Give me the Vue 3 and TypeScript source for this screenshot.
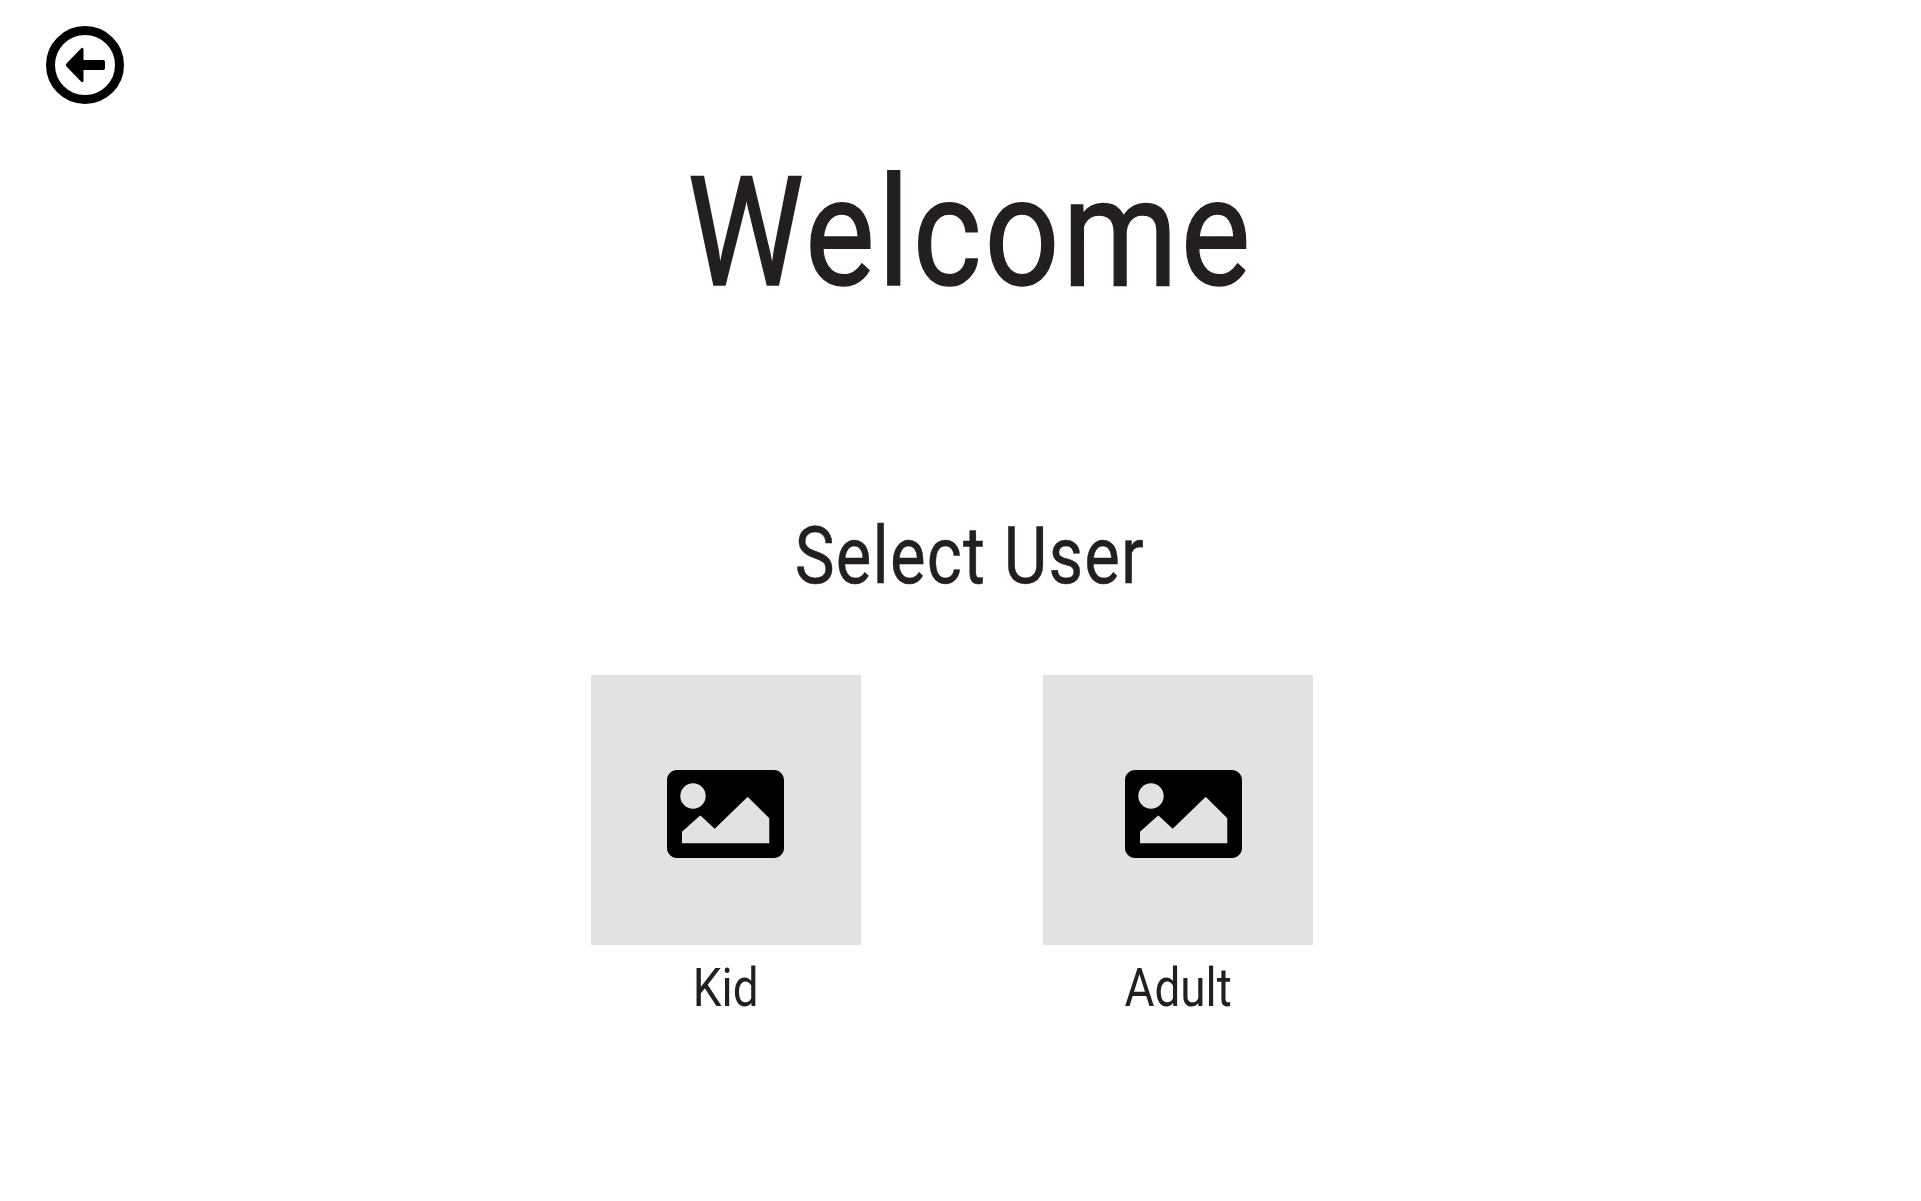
<script setup lang="ts">
interface UserOption {
  name: string
}

const users: UserOption[] = [{ name: 'Kid' }, { name: 'Adult' }]
</script>

<template>
  <main class="page">
    <button class="back" type="button" aria-label="Back">
      <svg width="80" height="80" viewBox="0 0 80 80" aria-hidden="true">
        <circle cx="40" cy="40" r="34.500" fill="none" stroke="#000" stroke-width="9" />
        <path
          d="M21.500 38.500 36 23.500c1.200-1.200 2.500-.6 2.500 1V35H58c1.200 0 2 .8 2 2v6c0 1.200-.8 2-2 2H38.500v10.500c0 1.600-1.300 2.200-2.500 1L21.500 41.500c-.8-.8-.8-2.200 0-3Z"
          fill="#000"
        />
      </svg>
    </button>

    <h1 class="title"><span>Welcome</span></h1>
    <h2 class="subtitle"><span>Select User</span></h2>

    <section class="users">
      <div v-for="user in users" :key="user.name" class="user" :class="user.name.toLowerCase()">
        <div class="thumb">
          <svg class="pic" width="117" height="88" viewBox="0 0 117 88" aria-hidden="true">
            <path
              fill-rule="evenodd"
              d="M10 0h97c5.500 0 10 4.500 10 10v68c0 5.500-4.500 10-10 10H10C4.500 88 0 83.500 0 78V10C0 4.500 4.500 0 10 0ZM15 73.300h87.300v-25L81.700 27.800c-.6-.6-1.400-.6-2 0L47.700 58.700 34.300 46.200c-.6-.6-1.400-.6-2 0L15 61.700ZM26 13.300a12.700 12.700 0 1 0 0 25.400 12.700 12.700 0 0 0 0-25.400Z"
              fill="#000"
            />
          </svg>
        </div>
        <span class="label">{{ user.name }}</span>
      </div>
    </section>
  </main>
</template>

<style scoped>
.page {
  box-sizing: border-box;
  height: 1201px;
  padding: 25px 0 0 45px;
  background: #fff;
  color: #231f20;
  font-family: Roboto, "Noto Sans", sans-serif;
  overflow: hidden;
}

.back {
  display: block;
  width: 80px;
  height: 80px;
  padding: 0;
  border: 0;
  background: none;
}

.back svg {
  display: block;
}

.title,
.subtitle {
  display: flex;
  justify-content: center;
  margin: 0;
  padding-right: 26px;
  font-weight: 400;
  line-height: 1;
}

.title span,
.subtitle span {
  display: inline-block;
  white-space: nowrap;
}

.title {
  margin-top: 52px;
  font-size: 152px;
  -webkit-text-stroke: 1.500px #231f20;
}

.title span {
  letter-spacing: 3.500px;
  transform: scaleX(0.865);
}

.subtitle {
  margin-top: 208px;
  font-size: 79px;
  -webkit-text-stroke: 0.500px #231f20;
}

.subtitle span {
  letter-spacing: 1.300px;
  transform: scaleX(0.85);
}

.users {
  display: flex;
  gap: 182px;
  margin: 79px 0 0 546px;
}

.user {
  display: flex;
  flex-direction: column;
  align-items: center;
  width: 270px;
}

.thumb {
  display: flex;
  justify-content: center;
  width: 270px;
  height: 270px;
  background: #e2e2e2;
}

.pic {
  margin: 95px 1px 0 0;
}

.adult .pic {
  margin-left: 12px;
}

.label {
  display: inline-block;
  margin-top: 11px;
  font-size: 54px;
  line-height: 64px;
  transform: scaleX(0.85);
}
</style>

<style>
html,
body {
  margin: 0;
  background: #fff;
}
</style>
